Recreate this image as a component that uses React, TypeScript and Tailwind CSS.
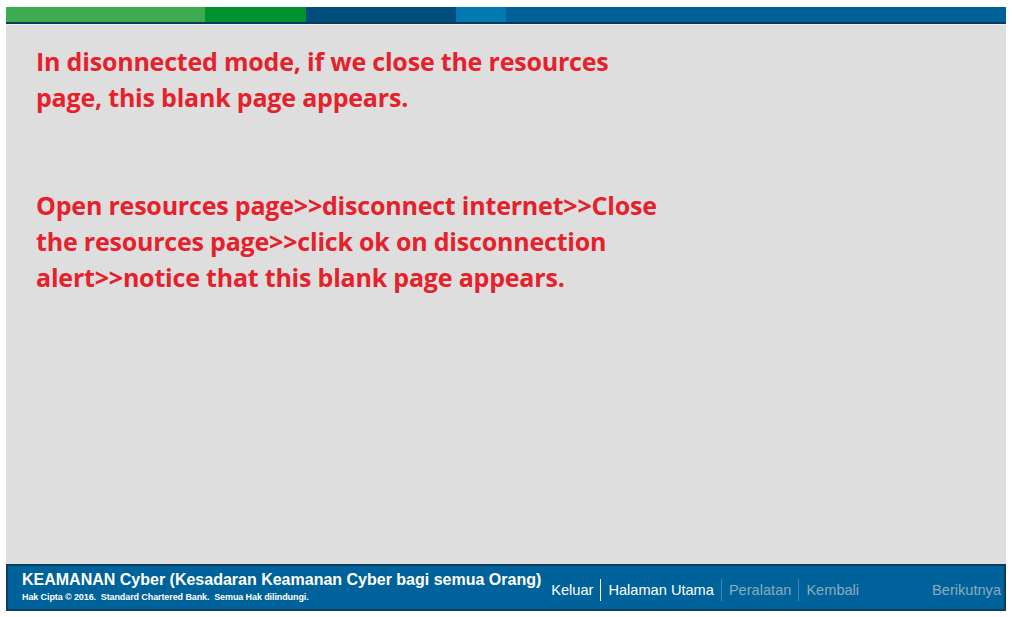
export default function App() {
  const navItems = [
    { label: 'Keluar', active: true },
    { label: 'Halaman Utama', active: true },
    { label: 'Peralatan', active: false },
    { label: 'Kembali', active: false },
  ];

  return (
    <div className="h-[617px] w-[1012px] bg-white px-[6px] pt-[7px]">
      <div className="flex h-[15px] w-full">
        <div className="w-[199px] bg-[#3dab4f]" />
        <div className="w-[101px] bg-[#009230]" />
        <div className="w-[150px] bg-[#004c7a]" />
        <div className="w-[50px] bg-[#0079b0]" />
        <div className="flex-1 bg-[#006199]" />
      </div>
      <div className="h-[2px] w-full bg-[#0b3a5a]" />
      <div className="h-[540px] w-full border-t border-[#eeeeee] bg-[#dedede] px-[30px] pt-[18px] font-['Open_Sans',sans-serif] text-[25px] font-bold leading-[36px] tracking-[-0.2px] text-[#e5212b]">
        <p>In disonnected mode, if we close the resources<br />page, this blank page appears.</p>
        <p className="mt-[72px]">
          Open resources page&gt;&gt;disconnect internet&gt;&gt;Close
          <br />
          the resources page&gt;&gt;click ok on disconnection
          <br />
          alert&gt;&gt;notice that this blank page appears.
        </p>
      </div>
      <footer className="flex h-[47px] w-full items-center border-2 border-[#0a3d5e] bg-[#00629a] font-['Liberation_Sans',Arial,sans-serif]">
        <div className="flex flex-col pl-[14px] pb-[2px]">
          <span className="text-[16px] font-bold leading-[18px] text-white">
            KEAMANAN Cyber (Kesadaran Keamanan Cyber bagi semua Orang)
          </span>
          <span className="mt-[3px] text-[9px] font-bold leading-[10px] tracking-[-0.1px] text-white whitespace-pre">
            Hak Cipta © 2016.  Standard Chartered Bank.  Semua Hak dilindungi.
          </span>
        </div>
        <nav className="ml-[3px] flex items-center pt-[4px] text-[14.6px] leading-[22px]">
          {navItems.map((item, i) => (
            <span
              key={item.label}
              className={`px-[7px] ${i > 0 ? 'border-l' : ''} ${
                item.active ? 'border-white text-white' : 'border-[#3f86b2] text-[#8fa9bf]'
              }`}
            >
              {item.label}
            </span>
          ))}
        </nav>
        <span className="ml-auto pr-[3px] pt-[4px] text-[14.6px] leading-[22px] text-[#8fa9bf]">Berikutnya</span>
      </footer>
    </div>
  );
}
